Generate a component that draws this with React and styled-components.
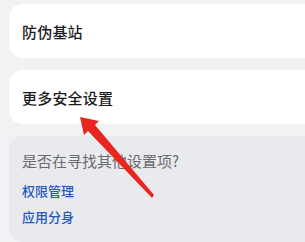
import React from 'react';
import styled, {createGlobalStyle} from 'styled-components';

const GlobalStyle = createGlobalStyle`
  html, body {
    margin: 0;
    padding: 0;
    background: #f1f2f4;
  }
  body {
    font-family: "Noto Sans CJK SC", "Noto Sans", sans-serif;
  }
`;

const Page = styled.div`
  position: relative;
  width: 305px;
  height: 242px;
  overflow: hidden;
  padding-top: 4px;
  box-sizing: border-box;
  display: flex;
  flex-direction: column;
  gap: 12px;
`;

const Card = styled.div`
  margin-left: 9px;
  width: 320px;
  border-radius: 14px;
  background: ${props => (props.muted ? '#e9eaed' : '#ffffff')};
  box-sizing: border-box;
`;

const ItemCard = styled(Card)`
  height: 54px;
  display: flex;
  align-items: center;
  padding-left: 13px;
`;

const ItemLabel = styled.span`
  font-size: 15px;
  font-weight: 500;
  color: #1c1c1c;
  letter-spacing: 0.2px;
`;

const HintCard = styled(Card)`
  height: 106px;
  padding: 14px 13px 0;
  display: flex;
  flex-direction: column;
`;

const HintTitle = styled.div`
  font-size: 15px;
  color: #6a6b6e;
  line-height: 22px;
  margin-bottom: 6px;
`;

const HintLink = styled.a`
  font-size: 13px;
  font-weight: 500;
  color: #2557c4;
  line-height: 26px;
  text-decoration: none;
`;

const Arrow = styled.svg`
  position: absolute;
  left: 0;
  top: 0;
  pointer-events: none;
`;

export default function App() {
  return (
    <>
      <GlobalStyle />
      <Page>
        <ItemCard>
          <ItemLabel>防伪基站</ItemLabel>
        </ItemCard>
        <ItemCard>
          <ItemLabel>更多安全设置</ItemLabel>
        </ItemCard>
        <HintCard muted>
          <HintTitle>是否在寻找其他设置项?</HintTitle>
          <HintLink>权限管理</HintLink>
          <HintLink>应用分身</HintLink>
        </HintCard>
        <Arrow width="305" height="242" viewBox="0 0 305 242">
          {/* red annotation arrow */}
          <polygon points="80,117 99,121 95,125 154,195 152,198 88,131 84,135" fill="#e8261f" />
        </Arrow>
      </Page>
    </>
  );
}
